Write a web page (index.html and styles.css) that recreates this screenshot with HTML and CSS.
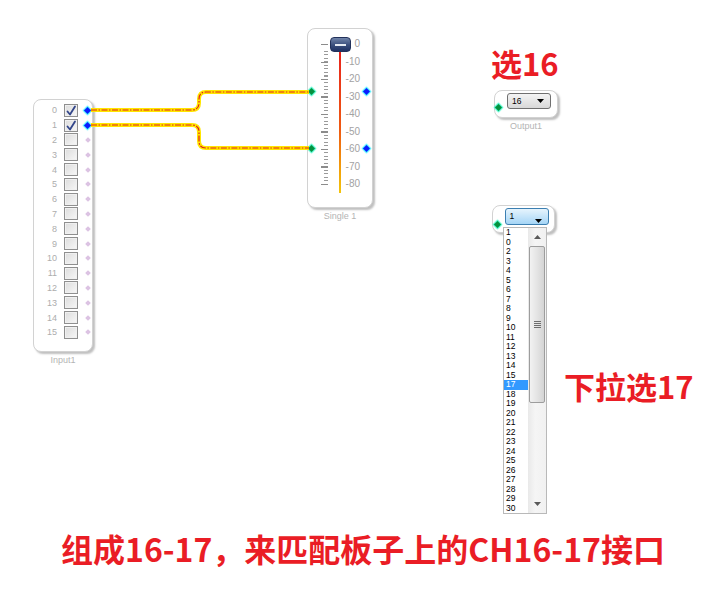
FILE: index.html
```html
<!DOCTYPE html>
<html lang="zh-CN">
<head>
  <meta charset="UTF-8">
  <title>CH16-17</title>
  <link rel="stylesheet" href="styles.css">
</head>
<body>
  <div class="canvas">

    <!-- Input1 -->
    <div class="node node-input">
      <div class="box">
        <div class="row"><span class="num">0</span><span class="chk on"><svg viewBox="0 0 12 11"><path d="M2.5 6.5 L5 9.5 L10 1.5"/></svg></span><span class="pin blue"></span></div>
        <div class="row"><span class="num">1</span><span class="chk on"><svg viewBox="0 0 12 11"><path d="M2.5 6.5 L5 9.5 L10 1.5"/></svg></span><span class="pin blue"></span></div>
        <div class="row"><span class="num">2</span><span class="chk"></span><span class="pin off"></span></div>
        <div class="row"><span class="num">3</span><span class="chk"></span><span class="pin off"></span></div>
        <div class="row"><span class="num">4</span><span class="chk"></span><span class="pin off"></span></div>
        <div class="row"><span class="num">5</span><span class="chk"></span><span class="pin off"></span></div>
        <div class="row"><span class="num">6</span><span class="chk"></span><span class="pin off"></span></div>
        <div class="row"><span class="num">7</span><span class="chk"></span><span class="pin off"></span></div>
        <div class="row"><span class="num">8</span><span class="chk"></span><span class="pin off"></span></div>
        <div class="row"><span class="num">9</span><span class="chk"></span><span class="pin off"></span></div>
        <div class="row"><span class="num">10</span><span class="chk"></span><span class="pin off"></span></div>
        <div class="row"><span class="num">11</span><span class="chk"></span><span class="pin off"></span></div>
        <div class="row"><span class="num">12</span><span class="chk"></span><span class="pin off"></span></div>
        <div class="row"><span class="num">13</span><span class="chk"></span><span class="pin off"></span></div>
        <div class="row"><span class="num">14</span><span class="chk"></span><span class="pin off"></span></div>
        <div class="row"><span class="num">15</span><span class="chk"></span><span class="pin off"></span></div>
      </div>
      <div class="caption">Input1</div>
    </div>

    <!-- Single 1 -->
    <div class="node node-slider">
      <div class="box">
        <div class="ticks"></div>
        <div class="track">
          <div class="line"></div>
          <div class="knob"></div>
        </div>
        <div class="scale">
          <span>0</span><span>-10</span><span>-20</span><span>-30</span><span>-40</span>
          <span>-50</span><span>-60</span><span>-70</span><span>-80</span>
        </div>
        <span class="pin green port-l1"></span>
        <span class="pin green port-l2"></span>
        <span class="pin blue port-r1"></span>
        <span class="pin blue port-r2"></span>
      </div>
      <div class="caption">Single 1</div>
    </div>

    <!-- Output1 -->
    <div class="node node-output">
      <div class="box">
        <span class="pin green"></span>
        <div class="combo">
          <span>16</span>
          <svg class="arrow" viewBox="0 0 7 4"><polygon points="0,0 7,0 3.5,4"/></svg>
        </div>
      </div>
      <div class="caption">Output1</div>
    </div>

    <!-- dropdown open -->
    <div class="node node-drop">
      <div class="box">
        <span class="pin green"></span>
        <div class="combo active">
          <span>1</span>
          <svg class="arrow" viewBox="0 0 7 4"><polygon points="0,0 7,0 3.5,4"/></svg>
        </div>
      </div>
    </div>

    <div class="droplist">
      <ul class="items">
        <li>1</li><li>0</li><li>2</li><li>3</li><li>4</li><li>5</li><li>6</li><li>7</li>
        <li>8</li><li>9</li><li>10</li><li>11</li><li>12</li><li>13</li><li>14</li><li>15</li>
        <li class="sel">17</li><li>18</li><li>19</li><li>20</li><li>21</li><li>22</li><li>23</li>
        <li>24</li><li>25</li><li>26</li><li>27</li><li>28</li><li>29</li><li>30</li>
      </ul>
      <div class="scrollbar">
        <div class="sb-btn"><svg viewBox="0 0 7 4"><polygon points="0,4 3.5,0 7,4"/></svg></div>
        <div class="sb-thumb"><span></span><span></span><span></span><span></span></div>
        <div class="sb-track"></div>
        <div class="sb-btn"><svg viewBox="0 0 7 4"><polygon points="0,0 7,0 3.5,4"/></svg></div>
      </div>
    </div>

    <!-- wires -->
    <svg class="wires" width="727" height="597">
      <path class="wire" d="M91 110 H192 Q199 110 199 103 V99 Q199 92 206 92 H309"/>
      <path class="wire-core" d="M91 110 H192 Q199 110 199 103 V99 Q199 92 206 92 H309"/>
      <path class="wire" d="M91 125 H192 Q199 125 199 132 V141 Q199 148 206 148 H309"/>
      <path class="wire-core" d="M91 125 H192 Q199 125 199 132 V141 Q199 148 206 148 H309"/>
    </svg>

    <div class="note note-16">选16</div>
    <div class="note note-17">下拉选17</div>
    <div class="note note-bottom">组成16-17，来匹配板子上的CH16-17接口</div>
  </div>
</body>
</html>
```

FILE: styles.css
```css
body {
  margin: 0;
  background: #fff;
  font-family: "Liberation Sans", Arial, sans-serif;
}
.canvas {
  position: relative;
  width: 727px;
  height: 597px;
  overflow: hidden;
  background: #fff;
}

/* nodes */
.node {
  position: absolute;
  display: flex;
  flex-direction: column;
  align-items: center;
}
.box {
  position: relative;
  box-sizing: border-box;
  width: 100%;
  background: #fff;
  border: 1px solid #d2d2d2;
  border-radius: 8px;
  box-shadow: 2px 2px 2px rgba(0,0,0,0.25);
}
.caption {
  margin-top: 3px;
  font-size: 9px;
  line-height: 11px;
  color: #b4b4b4;
  white-space: nowrap;
}

/* pins */
.pin {
  display: block;
  width: 5px;
  height: 5px;
  transform: rotate(45deg);
}
.pin.blue {
  background: #0a1cff;
  box-shadow: 0 0 1px 1px #3ef0ff;
}
.pin.green {
  background: #05913e;
  box-shadow: 0 0 1px 1px #3ff5c8;
}
.pin.off {
  width: 4px;
  height: 4px;
  margin-left: 1px;
  background: #dcc3e3;
}

/* Input1 */
.node-input {
  left: 33px;
  top: 99px;
  width: 60px;
}
.node-input .box {
  padding: 3px 0 11px 0;
}
.row {
  display: grid;
  grid-template-columns: 23px 14px 6px;
  column-gap: 7px;
  align-items: center;
  height: 14.8px;
}
.num {
  text-align: right;
  font-size: 9px;
  color: #adadad;
}
.chk {
  box-sizing: border-box;
  width: 14px;
  height: 13px;
  border: 1px solid #8f8f8f;
  background: linear-gradient(135deg, #dcdcdc, #f7f7f7);
  box-shadow: inset 0 0 0 1px #f0f0f0;
}
.chk svg {
  display: block;
  width: 12px;
  height: 11px;
}
.chk svg path {
  fill: none;
  stroke: #33468a;
  stroke-width: 1.8;
  stroke-linecap: round;
  stroke-linejoin: round;
}

/* Single 1 */
.node-slider {
  left: 307px;
  top: 28px;
  width: 66px;
}
.node-slider .box {
  height: 180px;
  display: flex;
  align-items: flex-start;
  padding: 6px 0 0 13px;
}
.ticks {
  width: 7px;
  height: 142px;
  margin-top: 9px;
  background:
    repeating-linear-gradient(to bottom, #8c8c8c 0 1px, transparent 1px 17.5px) left top / 7px 100% no-repeat,
    repeating-linear-gradient(to bottom, #9a9a9a 0 1px, transparent 1px 3.5px) right top / 4px 100% no-repeat;
}
.track {
  position: relative;
  width: 15px;
  height: 160px;
  margin-left: 2px;
}
.line {
  position: absolute;
  left: 9px;
  top: 17px;
  width: 2px;
  height: 141px;
  background: linear-gradient(to bottom, #e8241c, #ef5a12 55%, #f2a40a 85%, #f3c40c);
}
.knob {
  position: absolute;
  left: 0;
  top: 2px;
  width: 21px;
  height: 15px;
  box-sizing: border-box;
  border: 1px solid #22315a;
  border-radius: 4px;
  background: linear-gradient(to bottom, #7084aa, #3a4e7c 55%, #1f3264);
}
.knob::after {
  content: "";
  position: absolute;
  left: 4px;
  right: 4px;
  top: 6px;
  height: 2px;
  background: #e6ebf4;
}
.scale {
  display: flex;
  flex-direction: column;
  width: 15px;
  text-align: right;
  font-size: 10px;
  color: #a2a2a2;
}
.scale span {
  height: 17.5px;
  line-height: 17.5px;
}
.port-l1, .port-l2, .port-r1, .port-r2 {
  position: absolute;
}
.port-l1 { left: 0.5px; top: 59.5px; }
.port-l2 { left: 0.5px; top: 116.5px; }
.port-r1 { left: 55.5px; top: 59.5px; }
.port-r2 { left: 55.5px; top: 116.5px; }

/* combo boxes */
.node-output {
  left: 494px;
  top: 90px;
  width: 64px;
}
.node-output .box,
.node-drop .box {
  height: 28px;
  display: flex;
  align-items: flex-start;
}
.node-output .box {
  padding-top: 2px;
}
.node-output .pin {
  margin: 12px 0 0 1px;
}
.node-output .combo {
  margin-left: 6px;
}
.combo {
  box-sizing: border-box;
  width: 44px;
  height: 16px;
  display: flex;
  align-items: center;
  justify-content: space-between;
  padding: 0 6px 0 4px;
  border: 1px solid #707070;
  border-radius: 3px;
  background: linear-gradient(to bottom, #f4f4f4, #e6e6e6 50%, #d8d8d8);
  font-size: 8.5px;
  color: #000;
}
.arrow {
  width: 7px;
  height: 4px;
  fill: #000;
}
.node-drop {
  left: 492px;
  top: 205px;
  width: 63px;
}
.node-drop .box {
  padding-top: 2px;
}
.node-drop .pin {
  margin: 14px 0 0 1.5px;
}
.node-drop .combo {
  height: 17px;
  margin-left: 5px;
  align-items: flex-start;
  padding-top: 2px;
  border-color: #3c7fb1;
  background: linear-gradient(to bottom, #e6f4fd, #c6e5fa 50%, #a5d5f6);
}
.node-drop .combo .arrow {
  margin-top: 8px;
}

/* open list */
.droplist {
  position: absolute;
  left: 503px;
  top: 227px;
  width: 44px;
  height: 287px;
  box-sizing: border-box;
  display: flex;
  border: 1px solid #b9b9b9;
  background: #fff;
}
.items {
  list-style: none;
  margin: 0;
  padding: 0;
  flex: 1;
  font-size: 8.5px;
  color: #000;
}
.items li {
  height: 9.5px;
  line-height: 9.5px;
  padding-left: 2px;
}
.items li.sel {
  background: #3399ff;
  color: #fff;
}
.scrollbar {
  width: 18px;
  display: flex;
  flex-direction: column;
  background: linear-gradient(to right, #e9e9e9, #f5f5f5 40%, #f1f1f1);
}
.sb-btn {
  height: 18px;
  display: flex;
  align-items: center;
  justify-content: center;
}
.sb-btn svg {
  width: 7px;
  height: 4px;
  fill: #5a5a5a;
}
.sb-thumb {
  box-sizing: border-box;
  height: 157px;
  margin: 0 1px;
  border: 1px solid #9d9d9d;
  border-radius: 2px;
  background: linear-gradient(to right, #f2f2f2, #e4e4e4 50%, #d4d4d4);
  display: flex;
  flex-direction: column;
  align-items: center;
  justify-content: center;
  gap: 1px;
}
.sb-thumb span {
  width: 7px;
  height: 1px;
  background: #6e6e6e;
}
.sb-track {
  flex: 1;
}

/* wires */
.wires {
  position: absolute;
  left: 0;
  top: 0;
  pointer-events: none;
}
.wire {
  fill: none;
  stroke: #ffe600;
  stroke-width: 4;
}
.wire-core {
  fill: none;
  stroke: #e2211c;
  stroke-width: 1.2;
  stroke-dasharray: 6 1.5 1.5 1.5;
}

/* red notes */
.note {
  position: absolute;
  font-family: "Noto Sans CJK SC", "Liberation Sans", sans-serif;
  font-weight: 700;
  color: #ea1d25;
  line-height: 1;
  white-space: nowrap;
}
.note-16 {
  left: 491px;
  top: 47px;
  font-size: 31px;
}
.note-17 {
  left: 564px;
  top: 370px;
  font-size: 31px;
}
.note-bottom {
  left: 61px;
  top: 532px;
  font-size: 32px;
}
```
